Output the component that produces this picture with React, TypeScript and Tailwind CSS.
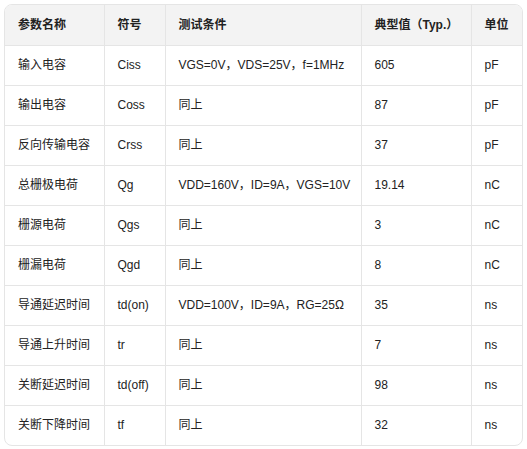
const rows = [
  ['输入电容', 'Ciss', 'VGS=0V，VDS=25V，f=1MHz', '605', 'pF'],
  ['输出电容', 'Coss', '同上', '87', 'pF'],
  ['反向传输电容', 'Crss', '同上', '37', 'pF'],
  ['总栅极电荷', 'Qg', 'VDD=160V，ID=9A，VGS=10V', '19.14', 'nC'],
  ['栅源电荷', 'Qgs', '同上', '3', 'nC'],
  ['栅漏电荷', 'Qgd', '同上', '8', 'nC'],
  ['导通延迟时间', 'td(on)', 'VDD=100V，ID=9A，RG=25Ω', '35', 'ns'],
  ['导通上升时间', 'tr', '同上', '7', 'ns'],
  ['关断延迟时间', 'td(off)', '同上', '98', 'ns'],
  ['关断下降时间', 'tf', '同上', '32', 'ns'],
]

const headers = ['参数名称', '符号', '测试条件', '典型值（Typ.）', '单位']
const widths = ['w-[99px]', 'w-[61px]', 'w-[196px]', 'w-[110px]', 'w-[51px]']

export default function App() {
  return (
    <div className="p-1 bg-white" style={{ fontFamily: '"Liberation Sans", "Noto Sans CJK SC", sans-serif' }}>
      <div className="w-[519px] rounded-lg border border-[#e5e5e5] overflow-hidden">
        <table className="w-full border-collapse table-fixed text-[12px] text-[#222]">
          <thead>
            <tr className="bg-[#f3f3f3] h-[40px]">
              {headers.map((h, i) => (
                <th
                  key={h}
                  className={`${widths[i]} text-left font-bold px-[13px] whitespace-nowrap border-[#e5e5e5] ${i > 0 ? 'border-l' : ''}`}
                >
                  {h}
                </th>
              ))}
            </tr>
          </thead>
          <tbody>
            {rows.map((r) => (
              <tr key={r[0]} className="h-[40px] border-t border-[#e5e5e5]">
                {r.map((c, i) => (
                  <td
                    key={i}
                    className={`px-[13px] whitespace-nowrap border-[#e5e5e5] ${i > 0 ? 'border-l' : ''}`}
                  >
                    {c}
                  </td>
                ))}
              </tr>
            ))}
          </tbody>
        </table>
      </div>
    </div>
  )
}
